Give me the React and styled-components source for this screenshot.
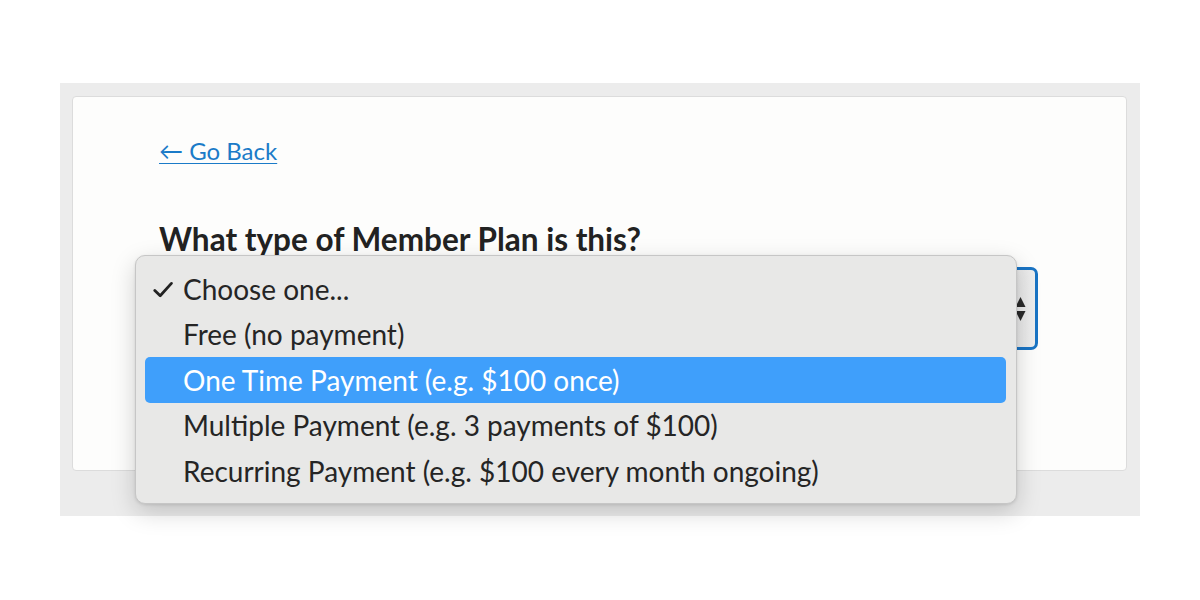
import React from "react";
import styled, { createGlobalStyle } from "styled-components";

const GlobalStyle = createGlobalStyle`
  html, body { margin: 0; padding: 0; background: #ffffff; }
  body { font-family: Lato, "Noto Sans", sans-serif; color: #222; }
`;

const Page = styled.div`
  width: 1200px;
  height: 600px;
  box-sizing: border-box;
  padding: 83px 60px 0 60px;
`;

const Frame = styled.div`
  background: #ececec;
  padding: 13px 13px 45px 12px;
`;

const Card = styled.div`
  background: #fdfdfc;
  border: 1px solid #dcdcdc;
  border-radius: 4px;
  box-sizing: border-box;
  height: 375px;
  padding: 38px 88px 0 86px;
`;

const BackLink = styled.a`
  display: block;
  width: fit-content;
  font-size: 24px;
  line-height: 32px;
  color: #1b7bc8;
  text-decoration: underline;
  text-underline-offset: 3px;
  text-decoration-thickness: 1px;
`;

const Heading = styled.h2`
  margin: 53px 0 0 0;
  font-size: 31.5px;
  line-height: 38px;
  font-weight: 700;
  color: #222;
`;

const SelectWrap = styled.div`
  position: relative;
  margin-top: 9px;
`;

const SelectBox = styled.div`
  box-sizing: border-box;
  height: 83px;
  border: 3px solid #1a74c4;
  border-radius: 7px;
  background: linear-gradient(to right, #fdfdfc 0%, #fdfdfc 90%, #e4e4e4 97%, #eeeeee 100%);
  display: flex;
  align-items: center;
  justify-content: flex-end;
  padding-right: 9px;
`;

const Menu = styled.ul`
  position: absolute;
  left: -24px;
  top: -12px;
  width: 882px;
  box-sizing: border-box;
  margin: 0;
  list-style: none;
  padding: 10px 10px 9px 9px;
  background: #e8e8e7;
  border: 1px solid #c6c6c6;
  border-radius: 10px;
  box-shadow: 0 8px 24px rgba(0, 0, 0, 0.18), 0 1px 3px rgba(0, 0, 0, 0.1);
`;

const Item = styled.li`
  position: relative;
  height: 45.5px;
  display: flex;
  align-items: center;
  padding-left: 38px;
  font-size: 28px;
  color: ${(p) => (p.$active ? "#ffffff" : "#252525")};
  background: ${(p) => (p.$active ? "#3f9ffb" : "transparent")};
  border-radius: 5px;
  white-space: nowrap;
`;

const Check = styled.svg`
  position: absolute;
  left: 8px;
  top: 50%;
  transform: translateY(-45%);
`;

const options = [
  "Choose one...",
  "Free (no payment)",
  "One Time Payment (e.g. $100 once)",
  "Multiple Payment (e.g. 3 payments of $100)",
  "Recurring Payment (e.g. $100 every month ongoing)",
];

export default function App() {
  return (
    <>
      <GlobalStyle />
      <Page>
        <Frame>
          <Card>
            <BackLink href="#">← Go Back</BackLink>
            <Heading>What type of Member Plan is this?</Heading>
            <SelectWrap>
              <SelectBox>
                <svg width="11" height="26" viewBox="0 0 11 26">
                  <path d="M5.5 1 L10.5 11 L0.5 11 Z" fill="#2a2a2a" />
                  <path d="M5.5 25 L10.5 15 L0.5 15 Z" fill="#2a2a2a" />
                </svg>
              </SelectBox>
              <Menu>
                {options.map((o, i) => (
                  <Item key={o} $active={i === 2}>
                    {i === 0 && (
                      <Check width="20" height="16" viewBox="0 0 20 16">
                        <path
                          d="M1.8 8.6 L7.2 14 L18.4 1.6"
                          fill="none"
                          stroke="#222"
                          strokeWidth="2.8"
                          strokeLinecap="round"
                          strokeLinejoin="round"
                        />
                      </Check>
                    )}
                    {o}
                  </Item>
                ))}
              </Menu>
            </SelectWrap>
          </Card>
        </Frame>
      </Page>
    </>
  );
}
